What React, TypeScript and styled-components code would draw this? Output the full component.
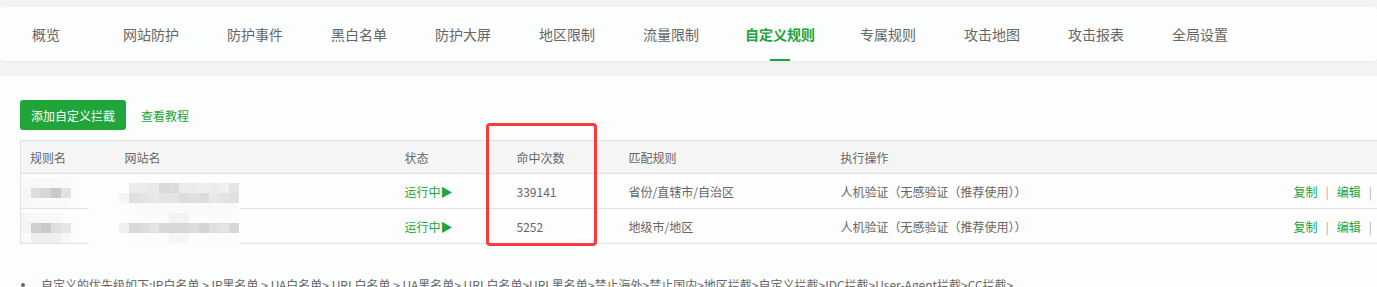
import React from 'react';
import styled, { createGlobalStyle } from 'styled-components';

const GlobalStyle = createGlobalStyle`
  html, body {
    margin: 0;
    padding: 0;
    overflow: hidden;
    background: #f2f3f4;
  }
  body {
    font-family: "Noto Sans CJK SC", "Noto Sans", sans-serif;
    color: #666;
  }
`;

const Page = styled.div`
  width: 100%;
  height: 287px;
  overflow: hidden;
  padding-top: 7px;
  box-sizing: border-box;
`;

const NavBar = styled.div`
  height: 54px;
  background: #fcfdfd;
  border-radius: 4px;
  box-shadow: 0 1px 3px rgba(0, 0, 0, 0.04);
  display: flex;
  align-items: stretch;
  padding-left: 8px;
`;

const NavItem = styled.div<{ $active?: boolean; $wide?: boolean }>`
  position: relative;
  display: flex;
  align-items: center;
  padding: ${(p) => (p.$active ? '0 21px 0 22px' : '0 24px')};
  min-width: ${(p) => (p.$wide ? '91px' : 'auto')};
  box-sizing: border-box;
  font-size: 14px;
  color: ${(p) => (p.$active ? '#20a53a' : '#666')};
  font-weight: ${(p) => (p.$active ? 700 : 400)};
  white-space: nowrap;

  &::after {
    content: '';
    display: ${(p) => (p.$active ? 'block' : 'none')};
    position: absolute;
    left: 50%;
    bottom: 0;
    width: 20px;
    height: 2px;
    margin-left: -10px;
    background: #20a53a;
  }
`;

const Content = styled.div`
  margin-top: 15px;
  background: #fcfdfd;
  padding: 24px 0 0 20px;
  height: 220px;
`;

const Toolbar = styled.div`
  display: flex;
  align-items: center;
  gap: 15px;
  height: 30px;
`;

const PrimaryButton = styled.button`
  height: 30px;
  padding: 0 11px;
  border: none;
  border-radius: 3px;
  background: #20a53a;
  color: #fff;
  font-family: inherit;
  font-size: 12px;
  cursor: pointer;
`;

const TextLink = styled.a`
  font-size: 12px;
  color: #20a53a;
  text-decoration: none;
`;

const TableWrap = styled.div`
  position: relative;
  margin-top: 10px;
  width: 1396px;
`;

const Table = styled.table`
  width: 100%;
  border-collapse: collapse;
  table-layout: fixed;
  border-left: 1px solid #e2e2e2;
  font-size: 12px;
`;

const HeadCell = styled.th<{ $w?: number }>`
  width: ${(p) => (p.$w ? `${p.$w}px` : 'auto')};
  box-sizing: border-box;
  height: 33px;
  padding: 0 0 0 9px;
  background: #f5f5f5;
  border-top: 1px solid #e2e2e2;
  border-bottom: 1px solid #e2e2e2;
  font-weight: 400;
  color: #666;
  text-align: left;
`;

const Cell = styled.td<{ $green?: boolean; $right?: boolean }>`
  height: 33px;
  padding: ${(p) => (p.$right ? '0 12px 0 0' : '0 0 0 9px')};
  border-bottom: 1px solid #e2e2e2;
  color: ${(p) => (p.$green ? '#20a53a' : '#666')};
  text-align: ${(p) => (p.$right ? 'right' : 'left')};
  white-space: nowrap;
  background: #fdfdfd;
`;

const Actions = styled.span`
  display: inline-flex;
  align-items: center;
  gap: 8px;
`;

const ActionLink = styled.a`
  color: #20a53a;
  text-decoration: none;
`;

const Sep = styled.span`
  color: #aaa;
`;

const MosaicGrid = styled.div<{ $cols: number }>`
  display: grid;
  grid-template-columns: repeat(${(p) => p.$cols}, 10px);
  grid-auto-rows: 10px;
`;

const Pixel = styled.span`
  display: block;
`;

const RuleMosaic = styled.div`
  margin-left: -9px;
  margin-top: 4px;
`;

const Redaction = styled.div`
  position: absolute;
  left: 69px;
  top: 34px;
  width: 151px;
  height: 78px;
  background: #fdfdfd;
  padding: 9px 0 0 30px;
  box-sizing: border-box;
`;

const HitBox = styled.div`
  position: absolute;
  left: 466px;
  top: -17px;
  width: 111px;
  height: 123px;
  border: 3px solid #fd3a3a;
  border-radius: 4px;
  box-sizing: border-box;
`;

const Notes = styled.ul`
  list-style: none;
  margin: 31px 0 0;
  padding: 0;
`;

const Note = styled.li`
  display: flex;
  align-items: center;
  gap: 16px;
  font-size: 12px;
  line-height: 20px;
  color: #666;
  white-space: nowrap;
`;

const Dot = styled.span`
  width: 4px;
  height: 4px;
  margin-left: 1px;
  border-radius: 50%;
  background: #666;
  flex: none;
`;

const Mosaic: React.FC<{ rows: string[] }> = ({ rows }) => {
  const cols = rows[0].split(' ').length;
  return (
    <MosaicGrid $cols={cols}>
      {rows.flatMap((row, r) =>
        row.split(' ').map((shade, c) => (
          <Pixel key={`${r}-${c}`} style={{ background: `#${shade}${shade}${shade}` }} />
        )),
      )}
    </MosaicGrid>
  );
};

const tabs = ['概览', '网站防护', '防护事件', '黑白名单', '防护大屏', '地区限制', '流量限制', '自定义规则', '专属规则', '攻击地图', '攻击报表', '全局设置'];

const ruleMosaics = [
  ['fa f8 f8 f8 fa fc', 'f6 dc d6 c9 e2 fc', 'f8 fa fa fa fa fc'],
  ['f6 f8 f8 f8 fc fc', 'f4 cf c9 de e6 fc', 'fa ee ee f0 f6 fc'],
];

const siteMosaic = [
  'fd ec ec e9 da dc ec ec ee ec f0 e4',
  'f6 e0 e4 e8 e4 e4 dc e0 dc e8 e4 e0',
  'fc fa fa fa fa fa fa fa fa fa fa fa',
  'fd fc fc fc fc f2 f2 fc fc fc fc fc',
  'f0 d8 dc e4 d8 d8 d8 dc d4 e0 e4 d8',
  'fd fc fc fc fc f6 f6 fc fc fc fc fc',
];

const rows = [
  { hits: '339141', match: '省份/直辖市/自治区' },
  { hits: '5252', match: '地级市/地区' },
];

export default function App() {
  return (
    <Page>
      <GlobalStyle />
      <NavBar>
        {tabs.map((t, i) => (
          <NavItem key={t} $active={t === '自定义规则'} $wide={i === 0}>
            {t}
          </NavItem>
        ))}
      </NavBar>
      <Content>
        <Toolbar>
          <PrimaryButton>添加自定义拦截</PrimaryButton>
          <TextLink>查看教程</TextLink>
        </Toolbar>
        <TableWrap>
          <Table>
            <thead>
              <tr>
                <HeadCell $w={95}>规则名</HeadCell>
                <HeadCell $w={280}>网站名</HeadCell>
                <HeadCell $w={112}>状态</HeadCell>
                <HeadCell $w={112}>命中次数</HeadCell>
                <HeadCell $w={212}>匹配规则</HeadCell>
                <HeadCell $w={300}>执行操作</HeadCell>
                <HeadCell />
              </tr>
            </thead>
            <tbody>
              {rows.map((r, i) => (
                <tr key={r.hits}>
                  <Cell>
                    <RuleMosaic>
                      <Mosaic rows={ruleMosaics[i]} />
                    </RuleMosaic>
                  </Cell>
                  <Cell />
                  <Cell $green>运行中▶</Cell>
                  <Cell>{r.hits}</Cell>
                  <Cell>{r.match}</Cell>
                  <Cell>人机验证（无感验证（推荐使用））</Cell>
                  <Cell $right>
                    <Actions>
                      <ActionLink>复制</ActionLink>
                      <Sep>|</Sep>
                      <ActionLink>编辑</ActionLink>
                      <Sep>|</Sep>
                      <ActionLink>删除</ActionLink>
                    </Actions>
                  </Cell>
                </tr>
              ))}
            </tbody>
          </Table>
          <Redaction>
            <Mosaic rows={siteMosaic} />
          </Redaction>
          <HitBox />
        </TableWrap>
        <Notes>
          <Note>
            <Dot />
            自定义的优先级如下:IP白名单 &gt; IP黑名单 &gt; UA白名单&gt; URL白名单 &gt; UA黑名单&gt; URL白名单&gt;URL黑名单&gt;禁止海外&gt;禁止国内&gt;地区拦截&gt;自定义拦截&gt;IDC拦截&gt;User-Agent拦截&gt;CC拦截&gt;
          </Note>
        </Notes>
      </Content>
    </Page>
  );
}
